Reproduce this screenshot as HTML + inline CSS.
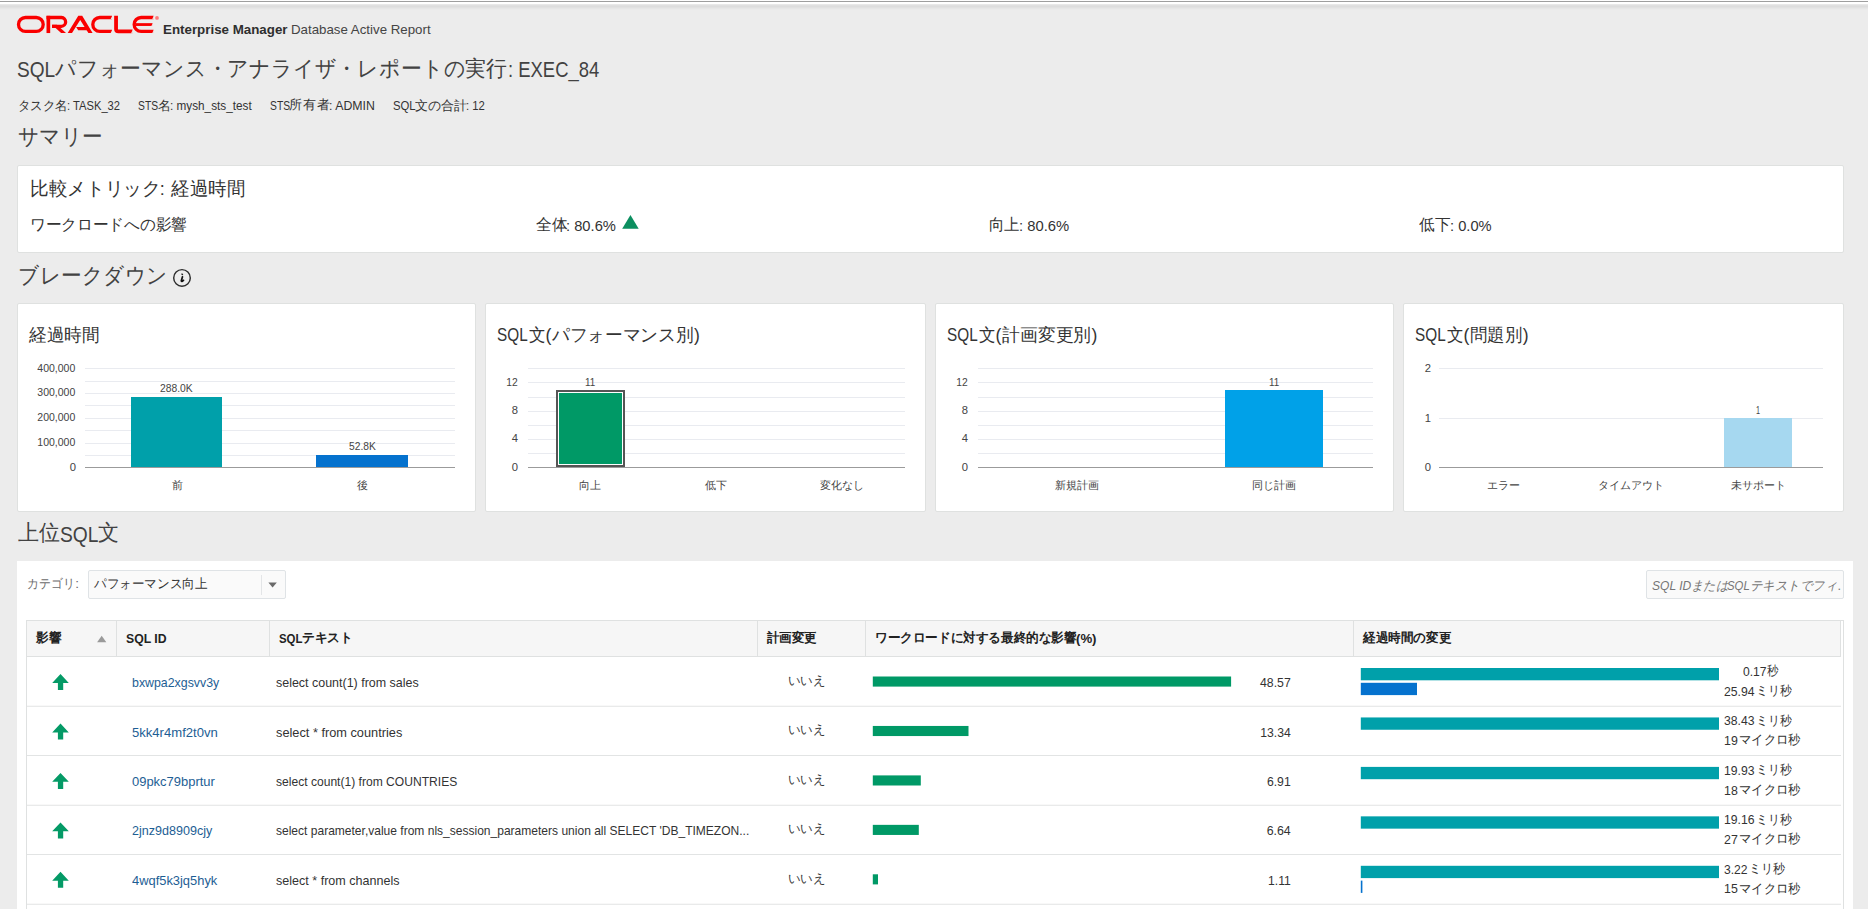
<!DOCTYPE html>
<html lang="ja">
<head>
<meta charset="utf-8">
<title>SQL Performance Analyzer Report</title>
<style>
html,body{margin:0;padding:0;}
body{width:1868px;height:909px;overflow:hidden;background:#ececec;position:relative;font-family:"Liberation Sans",sans-serif;color:#333;}
.a{position:absolute;box-sizing:border-box;}
.t{position:absolute;white-space:pre;line-height:20px;font-family:"Liberation Sans",sans-serif;}
.j{position:absolute;display:block;white-space:nowrap;line-height:20px;height:20px;font-family:"Liberation Sans",sans-serif;text-align:justify;text-align-last:justify;}
.c{text-align:center;text-align-last:center;}
svg{position:absolute;left:0;top:0;overflow:visible;}
</style>
</head>
<body>
<div class="a" style="left:0px;top:0px;width:1868px;height:1px;background:#fdfdfd;"></div>
<div class="a" style="left:0px;top:1px;width:1868px;height:1px;background:#9e9e9e;"></div>
<div class="a" style="left:0px;top:2px;width:1868px;height:2px;background:#ffffff;"></div>
<div class="a" style="left:0px;top:4px;width:1868px;height:1px;background:#e8e8e8;"></div>
<div class="a" style="left:0px;top:5px;width:1868px;height:1px;background:#e0e0e0;"></div>
<div class="a" style="left:0px;top:6px;width:1868px;height:1px;background:#dddddd;"></div>
<div class="a" style="left:0px;top:7px;width:1868px;height:1px;background:#e1e1e1;"></div>
<div class="a" style="left:0px;top:8px;width:1868px;height:1px;background:#e6e6e6;"></div>
<div class="a" style="left:0px;top:9px;width:1868px;height:1px;background:#eaeaea;"></div>
<svg width="170" height="40" viewBox="0 0 170 40">
<g fill="none" stroke="#fa0000" stroke-width="3.3">
<rect x="18.5" y="17.5" width="24.7" height="13.9" rx="6.95"/>
<path d="M46.5 17.5H61.4A4.43 4.43 0 0 1 61.4 26.35H52"/>
<path d="M112 17.5H99.75A6.95 6.95 0 0 0 99.75 31.4H112"/>
<path d="M153.6 17.5H141.1A6.95 6.95 0 0 0 141.1 31.4H153.6"/>
<path d="M135.5 24.55H152.6" stroke-width="2.8"/>
<path d="M116.05 15.85V29.2Q116.05 31.4 118.4 31.4H132.6" stroke-width="3.8"/>
</g>
<g fill="#fa0000">
<rect x="46.5" y="15.85" width="3.7" height="17.2"/>
<polygon points="52,24.8 56.9,24.8 66,33.05 61.1,33.05"/>
<polygon points="67.7,33.05 78.3,15.85 82.2,15.85 92.6,33.05 88.4,33.05 80.2,19.9 72,33.05"/>
<polygon points="76.1,27 85.4,27 87.4,30.2 78.2,30.2"/>
</g>
<g fill="#ececec"><polygon points="112.3,15.6 112.3,19.3 110.6,19.3"/><polygon points="112.3,29.5 112.3,33.2 110.6,33.2"/><polygon points="153.9,15.6 153.9,19.3 152.2,19.3"/><polygon points="152.9,22.9 152.9,26.1 151.4,26.1"/><polygon points="153.9,29.5 153.9,33.2 152.2,33.2"/><polygon points="132.9,29.3 132.9,33.5 131,33.5"/></g><circle cx="157" cy="17.9" r="1.9" fill="#ff7a7a"/>
</svg>
<svg width="200" height="300" viewBox="0 0 200 300"><circle cx="182" cy="277.9" r="8.3" fill="none" stroke="#2e2e2e" stroke-width="1.45"/>
<path d="M181.9 273.2L183.3 274.2L182.4 275.2L181.1 274.2Z" fill="#111"/>
<path d="M182.5 276.7L181.3 280.7Q181.2 281.7 182.3 281.2L183.5 280.3" fill="none" stroke="#111" stroke-width="1.7" stroke-linecap="round" stroke-linejoin="round"/></svg>
<div class="a" style="left:17px;top:165px;width:1827px;height:88px;background:#fff;border:1px solid #dfe1e0;border-radius:2px;"></div>
<svg width="700" height="240" viewBox="0 0 700 240"><polygon points="622.2,228.8 638.7,228.8 630.45,214.9" fill="#0c8f60"/></svg>
<div class="a" style="left:17px;top:303px;width:459px;height:209px;background:#fff;border:1px solid #dfe1e0;border-radius:2px;"></div>
<div class="a" style="left:485px;top:303px;width:441px;height:209px;background:#fff;border:1px solid #dfe1e0;border-radius:2px;"></div>
<div class="a" style="left:935px;top:303px;width:459px;height:209px;background:#fff;border:1px solid #dfe1e0;border-radius:2px;"></div>
<div class="a" style="left:1403px;top:303px;width:441px;height:209px;background:#fff;border:1px solid #dfe1e0;border-radius:2px;"></div>
<div class="a" style="left:85px;top:368px;width:370px;height:1px;background:#e9ebf0;"></div>
<div class="a" style="left:85px;top:381px;width:370px;height:1px;background:#e9ebf0;"></div>
<div class="a" style="left:85px;top:393px;width:370px;height:1px;background:#e9ebf0;"></div>
<div class="a" style="left:85px;top:405px;width:370px;height:1px;background:#e9ebf0;"></div>
<div class="a" style="left:85px;top:418px;width:370px;height:1px;background:#e9ebf0;"></div>
<div class="a" style="left:85px;top:430px;width:370px;height:1px;background:#e9ebf0;"></div>
<div class="a" style="left:85px;top:443px;width:370px;height:1px;background:#e9ebf0;"></div>
<div class="a" style="left:85px;top:455px;width:370px;height:1px;background:#e9ebf0;"></div>
<div class="a" style="left:85px;top:467px;width:370px;height:1px;background:#9b9b9b;"></div>
<div class="a" style="left:131px;top:397px;width:91px;height:70px;background:#00a0aa;"></div>
<div class="a" style="left:316px;top:455px;width:92px;height:12px;background:#0572ce;"></div>
<div class="a" style="left:528px;top:368px;width:377px;height:1px;background:#e9ebf0;"></div>
<div class="a" style="left:528px;top:382px;width:377px;height:1px;background:#e9ebf0;"></div>
<div class="a" style="left:528px;top:397px;width:377px;height:1px;background:#e9ebf0;"></div>
<div class="a" style="left:528px;top:411px;width:377px;height:1px;background:#e9ebf0;"></div>
<div class="a" style="left:528px;top:425px;width:377px;height:1px;background:#e9ebf0;"></div>
<div class="a" style="left:528px;top:439px;width:377px;height:1px;background:#e9ebf0;"></div>
<div class="a" style="left:528px;top:453px;width:377px;height:1px;background:#e9ebf0;"></div>
<div class="a" style="left:528px;top:467px;width:377px;height:1px;background:#9b9b9b;"></div>
<div class="a" style="left:556px;top:390px;width:69px;height:77px;background:#009966;border:2px solid #555;box-shadow:inset 0 0 0 1px #fff;"></div>
<div class="a" style="left:978px;top:368px;width:395px;height:1px;background:#e9ebf0;"></div>
<div class="a" style="left:978px;top:382px;width:395px;height:1px;background:#e9ebf0;"></div>
<div class="a" style="left:978px;top:397px;width:395px;height:1px;background:#e9ebf0;"></div>
<div class="a" style="left:978px;top:411px;width:395px;height:1px;background:#e9ebf0;"></div>
<div class="a" style="left:978px;top:425px;width:395px;height:1px;background:#e9ebf0;"></div>
<div class="a" style="left:978px;top:439px;width:395px;height:1px;background:#e9ebf0;"></div>
<div class="a" style="left:978px;top:453px;width:395px;height:1px;background:#e9ebf0;"></div>
<div class="a" style="left:978px;top:467px;width:395px;height:1px;background:#9b9b9b;"></div>
<div class="a" style="left:1225px;top:390px;width:98px;height:77px;background:#00a1e8;"></div>
<div class="a" style="left:1439px;top:368px;width:384px;height:1px;background:#e9ebf0;"></div>
<div class="a" style="left:1439px;top:418px;width:384px;height:1px;background:#e9ebf0;"></div>
<div class="a" style="left:1439px;top:467px;width:384px;height:1px;background:#9b9b9b;"></div>
<div class="a" style="left:1724px;top:418px;width:68px;height:49px;background:#a6d8f0;"></div>
<div class="a" style="left:17px;top:561px;width:1836px;height:348px;background:#fff;"></div>
<div class="a" style="left:88px;top:570px;width:198px;height:29px;background:#fafafa;border:1px solid #dfe3e6;border-radius:2px;"></div>
<div class="a" style="left:261px;top:575px;width:1px;height:20px;background:#e3e5e7;"></div>
<svg width="300" height="600" viewBox="0 0 300 600"><polygon points="268.4,582.6 276.8,582.6 272.6,587.6" fill="#6a6a6a"/></svg>
<div class="a" style="left:1646px;top:570px;width:198px;height:29px;background:#fafafa;border:1px solid #dfe3e6;border-radius:2px;"></div>
<div class="a" style="left:26px;top:620px;width:1818px;height:289px;border:1px solid #dfe1e1;border-bottom:none;"></div>
<div class="a" style="left:27px;top:621px;width:1814px;height:35px;background:#f6f6f6;"></div>
<div class="a" style="left:27px;top:656px;width:1814px;height:1px;background:#dfe1e1;"></div>
<div class="a" style="left:116px;top:621px;width:1px;height:35px;background:#dfe1e1;"></div>
<div class="a" style="left:269px;top:621px;width:1px;height:35px;background:#dfe1e1;"></div>
<div class="a" style="left:757px;top:621px;width:1px;height:35px;background:#dfe1e1;"></div>
<div class="a" style="left:865px;top:621px;width:1px;height:35px;background:#dfe1e1;"></div>
<div class="a" style="left:1353px;top:621px;width:1px;height:35px;background:#dfe1e1;"></div>
<div class="a" style="left:1840px;top:621px;width:1px;height:35px;background:#dfe1e1;"></div>
<svg width="1868" height="909" viewBox="0 0 1868 909"><rect x="27.00" y="705.75" width="1814.00" height="1.00" fill="#e2e4e4"/><rect x="27.00" y="755.00" width="1814.00" height="1.00" fill="#e2e4e4"/><rect x="27.00" y="804.75" width="1814.00" height="1.00" fill="#e2e4e4"/><rect x="27.00" y="854.00" width="1814.00" height="1.00" fill="#e2e4e4"/><rect x="27.00" y="903.75" width="1814.00" height="1.00" fill="#e2e4e4"/><rect x="872.80" y="676.50" width="358.30" height="10.10" fill="#009966"/><rect x="1360.80" y="668.00" width="358.20" height="12.30" fill="#00a0aa"/><rect x="1360.80" y="682.80" width="56.20" height="12.30" fill="#0572ce"/><rect x="872.80" y="725.95" width="95.70" height="10.10" fill="#009966"/><rect x="1360.80" y="717.45" width="358.20" height="12.30" fill="#00a0aa"/><rect x="872.80" y="775.40" width="48.00" height="10.10" fill="#009966"/><rect x="1360.80" y="766.90" width="358.20" height="12.30" fill="#00a0aa"/><rect x="872.80" y="824.85" width="46.00" height="10.10" fill="#009966"/><rect x="1360.80" y="816.35" width="358.20" height="12.30" fill="#00a0aa"/><rect x="872.80" y="874.30" width="5.20" height="10.10" fill="#009966"/><rect x="1360.80" y="865.80" width="358.20" height="12.30" fill="#00a0aa"/><rect x="1360.80" y="880.60" width="1.60" height="12.30" fill="#0572ce"/><polygon points="97.1,642.2 106.3,642.2 101.7,635.8" fill="#9a9a9a"/><g fill="#049a66"><polygon points="60.5,674.0 68.8,682.9 63.2,682.9 63.2,690.0 57.9,690.0 57.9,682.9 52.2,682.9"/><polygon points="60.5,723.5 68.8,732.4 63.2,732.4 63.2,739.5 57.9,739.5 57.9,732.4 52.2,732.4"/><polygon points="60.5,772.9 68.8,781.8 63.2,781.8 63.2,788.9 57.9,788.9 57.9,781.8 52.2,781.8"/><polygon points="60.5,822.4 68.8,831.2 63.2,831.2 63.2,838.4 57.9,838.4 57.9,831.2 52.2,831.2"/><polygon points="60.5,871.8 68.8,880.7 63.2,880.7 63.2,887.8 57.9,887.8 57.9,880.7 52.2,880.7"/></g></svg>
<span class="t" style="top:19.99px;font-size:13.3px;color:#2f2f2f;font-weight:700;transform:scaleX(1.0030);transform-origin:0 0;left:163.03px;">Enterprise Manager</span>
<span class="t" style="top:19.99px;font-size:13.3px;color:#444;transform:scaleX(0.9995);transform-origin:0 0;left:290.74px;">Database Active Report</span>
<span class="t" style="top:59.55px;font-size:21.5px;color:#424242;transform:scaleX(0.8866);transform-origin:0 0;left:16.75px;">SQL</span>
<span class="j" style="left:54.90px;top:59.38px;width:477.00px;font-size:22px;transform:scaleX(0.9476);transform-origin:0 0;color:#424242;">パフォーマンス・アナライザ・レポートの実行</span>
<span class="t" style="top:59.55px;font-size:21.5px;color:#424242;transform:scaleX(0.8578);transform-origin:0 0;left:507.66px;">: EXEC_84</span>
<span class="j" style="left:17.70px;top:95.50px;width:52.00px;font-size:13px;transform:scaleX(0.9558);transform-origin:0 0;">タスク名</span>
<span class="t" style="top:95.60px;font-size:12.7px;transform:scaleX(0.8817);transform-origin:0 0;left:67.08px;">: TASK_32</span>
<span class="t" style="top:95.60px;font-size:12.7px;transform:scaleX(0.8130);transform-origin:0 0;left:138.28px;">STS</span>
<span class="j c" style="left:157.60px;top:95.50px;width:13.10px;font-size:13px;">名</span>
<span class="t" style="top:95.60px;font-size:12.7px;transform:scaleX(0.9266);transform-origin:0 0;left:170.32px;">: mysh_sts_test</span>
<span class="t" style="top:95.60px;font-size:12.7px;transform:scaleX(0.8130);transform-origin:0 0;left:269.88px;">STS</span>
<span class="j" style="left:289.20px;top:95.36px;width:40.50px;font-size:13.4px;">所有者</span>
<span class="t" style="top:95.60px;font-size:12.7px;transform:scaleX(0.9711);transform-origin:0 0;left:328.97px;">: ADMIN</span>
<span class="t" style="top:95.60px;font-size:12.7px;transform:scaleX(0.8928);transform-origin:0 0;left:392.83px;">SQL</span>
<span class="j" style="left:414.80px;top:95.50px;width:52.00px;font-size:13px;transform:scaleX(0.9981);transform-origin:0 0;">文の合計</span>
<span class="t" style="top:95.60px;font-size:12.7px;transform:scaleX(0.8913);transform-origin:0 0;left:466.27px;">: 12</span>
<span class="j" style="left:17.50px;top:127.18px;width:91.00px;font-size:22px;transform:scaleX(0.9341);transform-origin:0 0;color:#424242;">サマリー</span>
<span class="j" style="left:18.00px;top:265.58px;width:160.00px;font-size:22px;transform:scaleX(0.9375);transform-origin:0 0;color:#424242;">ブレークダウン</span>
<span class="j" style="left:18.00px;top:523.08px;width:44.00px;font-size:22px;transform:scaleX(0.9545);transform-origin:0 0;color:#424242;">上位</span>
<span class="t" style="top:524.65px;font-size:21.5px;color:#424242;transform:scaleX(0.8935);transform-origin:0 0;left:60.14px;">SQL</span>
<span class="j c" style="left:98.30px;top:523.08px;width:22.00px;font-size:22px;transform:scaleX(0.9545);transform-origin:0 0;color:#424242;">文</span>
<span class="j" style="left:29.50px;top:178.82px;width:133.00px;font-size:18.7px;transform:scaleX(0.9812);transform-origin:0 0;">比較メトリック</span>
<span class="t" style="top:179.36px;font-size:18px;left:159.80px;">:</span>
<span class="j" style="left:170.50px;top:178.82px;width:76.00px;font-size:18.7px;transform:scaleX(0.9737);transform-origin:0 0;">経過時間</span>
<span class="j" style="left:29.50px;top:215.16px;width:160.00px;font-size:16px;transform:scaleX(0.9812);transform-origin:0 0;">ワークロードへの影響</span>
<span class="j" style="left:535.70px;top:215.16px;width:32.00px;font-size:16px;transform:scaleX(0.9781);transform-origin:0 0;">全体</span>
<span class="t" style="top:215.96px;font-size:15.4px;transform:scaleX(0.9566);transform-origin:0 0;left:566.33px;">: 80.6%</span>
<span class="j" style="left:989.00px;top:215.16px;width:32.00px;font-size:16px;transform:scaleX(0.9625);transform-origin:0 0;">向上</span>
<span class="t" style="top:215.96px;font-size:15.4px;transform:scaleX(0.9624);transform-origin:0 0;left:1019.32px;">: 80.6%</span>
<span class="j" style="left:1419.00px;top:215.16px;width:32.00px;font-size:16px;transform:scaleX(0.9781);transform-origin:0 0;">低下</span>
<span class="t" style="top:215.96px;font-size:15.4px;transform:scaleX(0.9542);transform-origin:0 0;left:1449.83px;">: 0.0%</span>
<span class="j" style="left:29.00px;top:324.76px;width:72.00px;font-size:18px;transform:scaleX(0.9833);transform-origin:0 0;">経過時間</span>
<span class="t" style="top:324.90px;font-size:17.6px;transform:scaleX(0.8706);transform-origin:0 0;left:497.23px;">SQL</span>
<span class="j c" style="left:528.80px;top:324.76px;width:18.00px;font-size:18px;transform:scaleX(0.9222);transform-origin:0 0;">文</span>
<span class="t" style="top:324.90px;font-size:17.6px;left:545.49px;">(</span>
<span class="j" style="left:551.60px;top:324.76px;width:144.00px;font-size:18px;transform:scaleX(0.9833);transform-origin:0 0;">パフォーマンス別</span>
<span class="t" style="top:324.90px;font-size:17.6px;left:693.94px;">)</span>
<span class="t" style="top:324.90px;font-size:17.6px;transform:scaleX(0.8706);transform-origin:0 0;left:947.23px;">SQL</span>
<span class="j c" style="left:978.80px;top:324.76px;width:18.00px;font-size:18px;transform:scaleX(0.9222);transform-origin:0 0;">文</span>
<span class="t" style="top:324.90px;font-size:17.6px;left:995.49px;">(</span>
<span class="j" style="left:1001.60px;top:324.76px;width:90.00px;font-size:18px;transform:scaleX(0.9911);transform-origin:0 0;">計画変更別</span>
<span class="t" style="top:324.90px;font-size:17.6px;left:1091.54px;">)</span>
<span class="t" style="top:324.90px;font-size:17.6px;transform:scaleX(0.8706);transform-origin:0 0;left:1415.23px;">SQL</span>
<span class="j c" style="left:1446.80px;top:324.76px;width:18.00px;font-size:18px;transform:scaleX(0.9222);transform-origin:0 0;">文</span>
<span class="t" style="top:324.90px;font-size:17.6px;left:1463.49px;">(</span>
<span class="j" style="left:1469.60px;top:324.76px;width:54.00px;font-size:18px;transform:scaleX(0.9685);transform-origin:0 0;">問題別</span>
<span class="t" style="top:324.90px;font-size:17.6px;left:1522.64px;">)</span>
<span class="t" style="top:358.33px;font-size:10.6px;color:#444;transform:scaleX(0.9912);transform-origin:100% 0;left:37.43px;">400,000</span>
<span class="t" style="top:382.23px;font-size:10.6px;color:#444;transform:scaleX(0.9912);transform-origin:100% 0;left:37.43px;">300,000</span>
<span class="t" style="top:407.03px;font-size:10.6px;color:#444;transform:scaleX(0.9912);transform-origin:100% 0;left:37.43px;">200,000</span>
<span class="t" style="top:432.13px;font-size:10.6px;color:#444;transform:scaleX(0.9912);transform-origin:100% 0;left:37.43px;">100,000</span>
<span class="t" style="top:456.93px;font-size:10.6px;color:#444;transform:scaleX(1.0599);transform-origin:100% 0;left:69.86px;">0</span>
<span class="t" style="top:377.93px;font-size:10.6px;color:#444;transform:scaleX(0.9727);transform-origin:0 0;left:160.28px;">288.0K</span>
<span class="t" style="top:435.93px;font-size:10.6px;color:#444;transform:scaleX(0.9665);transform-origin:0 0;left:348.79px;">52.8K</span>
<span class="j c" style="left:171.70px;top:474.72px;width:11.00px;font-size:11.2px;color:#444;">前</span>
<span class="j c" style="left:357.30px;top:474.72px;width:11.00px;font-size:11.2px;color:#444;">後</span>
<span class="t" style="top:371.93px;font-size:10.6px;color:#444;transform:scaleX(0.9714);transform-origin:100% 0;left:506.02px;">12</span>
<span class="t" style="top:400.03px;font-size:10.6px;color:#444;transform:scaleX(1.0599);transform-origin:100% 0;left:511.96px;">8</span>
<span class="t" style="top:428.03px;font-size:10.6px;color:#444;transform:scaleX(1.0599);transform-origin:100% 0;left:511.96px;">4</span>
<span class="t" style="top:456.93px;font-size:10.6px;color:#444;transform:scaleX(1.0599);transform-origin:100% 0;left:511.96px;">0</span>
<span class="t" style="top:371.93px;font-size:10.6px;color:#444;transform:scaleX(0.9327);transform-origin:0 0;left:585.01px;">11</span>
<span class="j" style="left:579.40px;top:474.92px;width:22.00px;font-size:11.2px;color:#444;">向上</span>
<span class="j" style="left:705.00px;top:474.92px;width:22.00px;font-size:11.2px;color:#444;">低下</span>
<span class="j" style="left:819.80px;top:474.92px;width:44.00px;font-size:11.2px;color:#444;">変化なし</span>
<span class="t" style="top:371.93px;font-size:10.6px;color:#444;transform:scaleX(0.9714);transform-origin:100% 0;left:956.22px;">12</span>
<span class="t" style="top:400.03px;font-size:10.6px;color:#444;transform:scaleX(1.0599);transform-origin:100% 0;left:962.16px;">8</span>
<span class="t" style="top:428.03px;font-size:10.6px;color:#444;transform:scaleX(1.0599);transform-origin:100% 0;left:962.16px;">4</span>
<span class="t" style="top:456.93px;font-size:10.6px;color:#444;transform:scaleX(1.0599);transform-origin:100% 0;left:962.16px;">0</span>
<span class="t" style="top:371.93px;font-size:10.6px;color:#444;transform:scaleX(0.9327);transform-origin:0 0;left:1268.71px;">11</span>
<span class="j" style="left:1054.50px;top:474.92px;width:44.00px;font-size:11.2px;color:#444;">新規計画</span>
<span class="j" style="left:1252.20px;top:474.92px;width:44.00px;font-size:11.2px;color:#444;">同じ計画</span>
<span class="t" style="top:358.33px;font-size:10.6px;color:#444;transform:scaleX(1.0599);transform-origin:100% 0;left:1424.86px;">2</span>
<span class="t" style="top:407.63px;font-size:10.6px;color:#444;transform:scaleX(1.0599);transform-origin:100% 0;left:1424.86px;">1</span>
<span class="t" style="top:456.93px;font-size:10.6px;color:#444;transform:scaleX(1.0599);transform-origin:100% 0;left:1424.86px;">0</span>
<span class="t" style="top:400.13px;font-size:10.6px;color:#444;transform:scaleX(0.6874);transform-origin:0 0;left:1755.63px;">1</span>
<span class="j" style="left:1486.70px;top:474.92px;width:33.00px;font-size:11.2px;color:#444;">エラー</span>
<span class="j" style="left:1598.20px;top:474.92px;width:66.00px;font-size:11.2px;color:#444;">タイムアウト</span>
<span class="j" style="left:1731.10px;top:474.92px;width:55.00px;font-size:11.2px;color:#444;">未サポート</span>
<span class="j" style="left:26.60px;top:574.36px;width:52.00px;font-size:13.4px;transform:scaleX(0.9115);transform-origin:0 0;color:#6b6b6b;">カテゴリ</span>
<span class="t" style="top:574.32px;font-size:13.5px;color:#6b6b6b;left:75.25px;">:</span>
<span class="j" style="left:93.70px;top:573.96px;width:117.00px;font-size:13.4px;transform:scaleX(0.9684);transform-origin:0 0;">パフォーマンス向上</span>
<span class="t" style="top:575.90px;font-size:12.7px;color:#767676;font-style:italic;transform:scaleX(0.9491);transform-origin:0 0;left:1651.70px;">SQL ID</span>
<span class="j" style="left:1690.50px;top:575.80px;width:39.00px;font-size:13px;transform:scaleX(0.9487);transform-origin:0 0;color:#767676;font-style:italic;">または</span>
<span class="t" style="top:575.90px;font-size:12.7px;color:#767676;font-style:italic;transform:scaleX(0.8968);transform-origin:0 0;left:1727.23px;">SQL</span>
<span class="j" style="left:1749.50px;top:575.80px;width:91.00px;font-size:13px;transform:scaleX(0.9560);transform-origin:0 0;color:#767676;font-style:italic;">テキストでフィ</span>
<span class="t" style="top:575.90px;font-size:12.7px;color:#767676;left:1837.50px;">.</span>
<span class="j" style="left:35.80px;top:628.20px;width:26.00px;font-size:13px;transform:scaleX(0.9692);transform-origin:0 0;color:#222;font-weight:700;">影響</span>
<span class="t" style="top:629.10px;font-size:13px;color:#222;font-weight:700;transform:scaleX(0.9418);transform-origin:0 0;left:125.99px;">SQL ID</span>
<span class="t" style="top:629.10px;font-size:13px;color:#222;font-weight:700;transform:scaleX(0.8790);transform-origin:0 0;left:278.63px;">SQL</span>
<span class="j" style="left:301.60px;top:628.20px;width:52.00px;font-size:13px;transform:scaleX(0.9769);transform-origin:0 0;color:#222;font-weight:700;">テキスト</span>
<span class="j" style="left:767.00px;top:628.20px;width:52.00px;font-size:13px;transform:scaleX(0.9615);transform-origin:0 0;color:#222;font-weight:700;">計画変更</span>
<span class="j" style="left:875.00px;top:628.20px;width:208.00px;font-size:13px;transform:scaleX(0.9692);transform-origin:0 0;color:#222;font-weight:700;">ワークロードに対する最終的な影響</span>
<span class="t" style="top:629.10px;font-size:13px;color:#222;font-weight:700;transform:scaleX(1.0139);transform-origin:0 0;left:1075.75px;">(%)</span>
<span class="j" style="left:1362.50px;top:628.20px;width:91.00px;font-size:13px;transform:scaleX(0.9692);transform-origin:0 0;color:#222;font-weight:700;">経過時間の変更</span>
<span class="t" style="top:673.10px;font-size:12.7px;color:#1d5e94;transform:scaleX(0.9744);transform-origin:0 0;left:132.08px;">bxwpa2xgsvv3y</span>
<span class="t" style="top:673.10px;font-size:12.7px;transform:scaleX(0.9821);transform-origin:0 0;left:276.18px;">select count(1) from sales</span>
<span class="j" style="left:788.00px;top:671.00px;width:39.00px;font-size:13px;transform:scaleX(0.9615);transform-origin:0 0;color:#3a3a3a;">いいえ</span>
<span class="t" style="top:673.10px;font-size:12.7px;transform:scaleX(0.9691);transform-origin:100% 0;left:1259.27px;">48.57</span>
<span class="t" style="top:661.80px;font-size:12.7px;transform:scaleX(0.9541);transform-origin:0 0;left:1742.59px;">0.17</span>
<span class="j c" style="left:1766.80px;top:661.20px;width:13.00px;font-size:13px;transform:scaleX(0.8846);transform-origin:0 0;">秒</span>
<span class="t" style="top:681.60px;font-size:12.7px;transform:scaleX(0.9628);transform-origin:0 0;left:1724.39px;">25.94</span>
<span class="j" style="left:1755.60px;top:681.00px;width:39.00px;font-size:13px;transform:scaleX(0.9154);transform-origin:0 0;">ミリ秒</span>
<span class="t" style="top:722.55px;font-size:12.7px;color:#1d5e94;transform:scaleX(1.0307);transform-origin:0 0;left:132.05px;">5kk4r4mf2t0vn</span>
<span class="t" style="top:722.55px;font-size:12.7px;transform:scaleX(1.0060);transform-origin:0 0;left:276.16px;">select * from countries</span>
<span class="j" style="left:788.00px;top:720.45px;width:39.00px;font-size:13px;transform:scaleX(0.9615);transform-origin:0 0;color:#3a3a3a;">いいえ</span>
<span class="t" style="top:722.55px;font-size:12.7px;transform:scaleX(0.9628);transform-origin:100% 0;left:1259.26px;">13.34</span>
<span class="t" style="top:711.25px;font-size:12.7px;transform:scaleX(0.9628);transform-origin:0 0;left:1724.39px;">38.43</span>
<span class="j" style="left:1755.60px;top:710.65px;width:39.00px;font-size:13px;transform:scaleX(0.9154);transform-origin:0 0;">ミリ秒</span>
<span class="t" style="top:731.05px;font-size:12.7px;transform:scaleX(0.9749);transform-origin:0 0;left:1724.38px;">19</span>
<span class="j" style="left:1738.80px;top:730.45px;width:65.00px;font-size:13px;transform:scaleX(0.9492);transform-origin:0 0;">マイクロ秒</span>
<span class="t" style="top:772.00px;font-size:12.7px;color:#1d5e94;transform:scaleX(1.0215);transform-origin:0 0;left:132.05px;">09pkc79bprtur</span>
<span class="t" style="top:772.00px;font-size:12.7px;transform:scaleX(0.9523);transform-origin:0 0;left:276.20px;">select count(1) from COUNTRIES</span>
<span class="j" style="left:788.00px;top:769.90px;width:39.00px;font-size:13px;transform:scaleX(0.9615);transform-origin:0 0;color:#3a3a3a;">いいえ</span>
<span class="t" style="top:772.00px;font-size:12.7px;transform:scaleX(0.9622);transform-origin:100% 0;left:1266.31px;">6.91</span>
<span class="t" style="top:760.70px;font-size:12.7px;transform:scaleX(0.9628);transform-origin:0 0;left:1724.39px;">19.93</span>
<span class="j" style="left:1755.60px;top:760.10px;width:39.00px;font-size:13px;transform:scaleX(0.9154);transform-origin:0 0;">ミリ秒</span>
<span class="t" style="top:780.50px;font-size:12.7px;transform:scaleX(0.9749);transform-origin:0 0;left:1724.38px;">18</span>
<span class="j" style="left:1738.80px;top:779.90px;width:65.00px;font-size:13px;transform:scaleX(0.9492);transform-origin:0 0;">マイクロ秒</span>
<span class="t" style="top:821.45px;font-size:12.7px;color:#1d5e94;transform:scaleX(0.9895);transform-origin:0 0;left:132.07px;">2jnz9d8909cjy</span>
<span class="t" style="top:821.45px;font-size:12.7px;transform:scaleX(0.9478);transform-origin:0 0;left:276.20px;">select parameter,value from nls_session_parameters union all SELECT &#x27;DB_TIMEZON...</span>
<span class="j" style="left:788.00px;top:819.35px;width:39.00px;font-size:13px;transform:scaleX(0.9615);transform-origin:0 0;color:#3a3a3a;">いいえ</span>
<span class="t" style="top:821.45px;font-size:12.7px;transform:scaleX(0.9744);transform-origin:100% 0;left:1266.32px;">6.64</span>
<span class="t" style="top:810.15px;font-size:12.7px;transform:scaleX(0.9628);transform-origin:0 0;left:1724.39px;">19.16</span>
<span class="j" style="left:1755.60px;top:809.55px;width:39.00px;font-size:13px;transform:scaleX(0.9154);transform-origin:0 0;">ミリ秒</span>
<span class="t" style="top:829.95px;font-size:12.7px;transform:scaleX(0.9749);transform-origin:0 0;left:1724.38px;">27</span>
<span class="j" style="left:1738.80px;top:829.35px;width:65.00px;font-size:13px;transform:scaleX(0.9492);transform-origin:0 0;">マイクロ秒</span>
<span class="t" style="top:870.90px;font-size:12.7px;color:#1d5e94;transform:scaleX(1.0159);transform-origin:0 0;left:132.05px;">4wqf5k3jq5hyk</span>
<span class="t" style="top:870.90px;font-size:12.7px;transform:scaleX(0.9891);transform-origin:0 0;left:276.17px;">select * from channels</span>
<span class="j" style="left:788.00px;top:868.80px;width:39.00px;font-size:13px;transform:scaleX(0.9615);transform-origin:0 0;color:#3a3a3a;">いいえ</span>
<span class="t" style="top:870.90px;font-size:12.7px;transform:scaleX(0.9581);transform-origin:100% 0;left:1267.24px;">1.11</span>
<span class="t" style="top:859.60px;font-size:12.7px;transform:scaleX(0.9541);transform-origin:0 0;left:1724.39px;">3.22</span>
<span class="j" style="left:1748.60px;top:859.00px;width:39.00px;font-size:13px;transform:scaleX(0.9282);transform-origin:0 0;">ミリ秒</span>
<span class="t" style="top:879.40px;font-size:12.7px;transform:scaleX(0.9749);transform-origin:0 0;left:1724.38px;">15</span>
<span class="j" style="left:1738.80px;top:878.80px;width:65.00px;font-size:13px;transform:scaleX(0.9492);transform-origin:0 0;">マイクロ秒</span>
</body>
</html>
